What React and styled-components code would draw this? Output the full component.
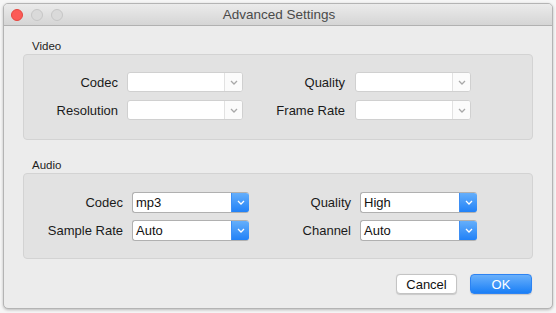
import React from 'react';
import styled, { createGlobalStyle } from 'styled-components';

const GlobalStyle = createGlobalStyle`
  html, body {
    margin: 0;
    padding: 0;
    background: #f6f6f6;
  }
  body {
    font-family: "Liberation Sans", Arial, sans-serif;
    font-size: 13px;
    color: #1e1e1e;
  }
`;

const Page = styled.div`
  width: 556px;
  height: 313px;
  padding: 3px 3px 4px 3px;
  box-sizing: border-box;
`;

const Window = styled.div`
  width: 550px;
  height: 306px;
  box-sizing: border-box;
  background: #ececec;
  border: 1px solid #b4b4b4;
  border-radius: 5px;
  box-shadow: 0 1px 3px rgba(0, 0, 0, 0.25);
  overflow: hidden;
  display: flex;
  flex-direction: column;
`;

const TitleBar = styled.div`
  position: relative;
  height: 21px;
  flex: none;
  background: linear-gradient(#ebebeb, #d5d5d5);
  border-bottom: 1px solid #b1b1b1;
  display: flex;
  align-items: center;
  justify-content: center;
`;

const Lights = styled.div`
  position: absolute;
  left: 7px;
  top: 5px;
  display: flex;
  gap: 8px;
`;

const Light = styled.span`
  width: 12px;
  height: 12px;
  border-radius: 50%;
  box-sizing: border-box;
  background: ${p => (p.$red ? '#fc5b57' : '#dadada')};
  border: 1px solid ${p => (p.$red ? '#e5463f' : '#c6c6c6')};
`;

const Title = styled.div`
  font-size: 13.5px;
  color: #4a4a4a;
  padding-left: 2px;
`;

const Content = styled.div`
  padding: 13px 19px 15px 19px;
  display: flex;
  flex-direction: column;
`;

const GroupLabel = styled.div`
  line-height: 15px;
  height: 15px;
  font-size: 11.5px;
  padding-left: 9px;
  margin-top: ${p => p.$gap || 0}px;
`;

const GroupBox = styled.div`
  height: 86px;
  box-sizing: border-box;
  background: #e2e2e2;
  border: 1px solid #d3d3d3;
  border-radius: 4px;
  padding-top: ${p => p.$top}px;
  display: grid;
  grid-template-columns: ${p => p.$cols};
  grid-auto-rows: ${p => p.$row}px;
  row-gap: ${p => p.$rowGap}px;
  align-content: start;
`;

const FieldLabel = styled.div`
  text-align: right;
  padding-right: ${p => p.$pad}px;
  font-size: 13px;
  display: flex;
  align-items: center;
  justify-content: flex-end;
  color: #1a1a1a;
`;

const Select = styled.div`
  display: flex;
  box-sizing: border-box;
  height: 100%;
  border: 1px solid ${p => (p.$active ? '#b0b0b0' : '#d0d0d0')};
  border-right: ${p => (p.$active ? 'none' : '1px solid #d0d0d0')};
  border-radius: 3px;
  background: #fff;
  overflow: hidden;
`;

const SelectValue = styled.div`
  flex: 1;
  padding-left: 3px;
  font-size: 13px;
  display: flex;
  align-items: center;
  color: #111;
`;

const Arrow = styled.div`
  width: 17px;
  flex: none;
  display: flex;
  align-items: center;
  justify-content: center;
  margin-top: ${p => (p.$active ? '-1px' : '0')};
  margin-bottom: ${p => (p.$active ? '-1px' : '0')};
  background: ${p => (p.$active ? 'linear-gradient(#68b1fb, #1e7ff7)' : '#fbfbfb')};
  border-left: 1px solid ${p => (p.$active ? '#3d8ff5' : '#e2e2e2')};
  border-radius: ${p => (p.$active ? '0 3px 3px 0' : '0')};
`;

const Footer = styled.div`
  margin-top: 15px;
  display: flex;
  justify-content: flex-end;
  gap: 13px;
  padding-right: 1px;
`;

const Button = styled.button`
  height: 20px;
  width: ${p => p.$w}px;
  box-sizing: border-box;
  font-family: inherit;
  font-size: 13px;
  padding: 0;
  border-radius: 4px;
  border: 1px solid ${p => (p.$primary ? '#2d83f2' : '#c4c4c4')};
  background: ${p => (p.$primary ? 'linear-gradient(#69b0fb, #1a7ff6)' : '#fff')};
  color: ${p => (p.$primary ? '#fff' : '#111')};
  box-shadow: 0 0.5px 1px rgba(0, 0, 0, 0.15);
`;

function Chevron({ color }) {
  return (
    <svg width="8" height="5" viewBox="0 0 8 5">
      <path d="M1 1 L4 4 L7 1" fill="none" stroke={color} strokeWidth="1.3" />
    </svg>
  );
}

function Dropdown({ value, active }) {
  return (
    <Select $active={active}>
      <SelectValue>{value}</SelectValue>
      <Arrow $active={active}>
        <Chevron color={active ? '#fff' : '#a8a8a8'} />
      </Arrow>
    </Select>
  );
}

export default function App() {
  return (
    <Page>
      <GlobalStyle />
      <Window>
        <TitleBar>
          <Lights>
            <Light $red />
            <Light />
            <Light />
          </Lights>
          <Title>Advanced Settings</Title>
        </TitleBar>
        <Content>
          <GroupLabel>Video</GroupLabel>
          <GroupBox $top={17} $row={20} $rowGap={8} $cols="103px 116px 112px 116px">
            <FieldLabel $pad={9}>Codec</FieldLabel>
            <Dropdown />
            <FieldLabel $pad={10}>Quality</FieldLabel>
            <Dropdown />
            <FieldLabel $pad={9}>Resolution</FieldLabel>
            <Dropdown />
            <FieldLabel $pad={10}>Frame Rate</FieldLabel>
            <Dropdown />
          </GroupBox>

          <GroupLabel $gap={18}>Audio</GroupLabel>
          <GroupBox $top={18} $row={21} $rowGap={7} $cols="108px 117px 111px 117px">
            <FieldLabel $pad={9}>Codec</FieldLabel>
            <Dropdown value="mp3" active />
            <FieldLabel $pad={9}>Quality</FieldLabel>
            <Dropdown value="High" active />
            <FieldLabel $pad={9}>Sample Rate</FieldLabel>
            <Dropdown value="Auto" active />
            <FieldLabel $pad={9}>Channel</FieldLabel>
            <Dropdown value="Auto" active />
          </GroupBox>

          <Footer>
            <Button $w={61}>Cancel</Button>
            <Button $w={62} $primary>OK</Button>
          </Footer>
        </Content>
      </Window>
    </Page>
  );
}
